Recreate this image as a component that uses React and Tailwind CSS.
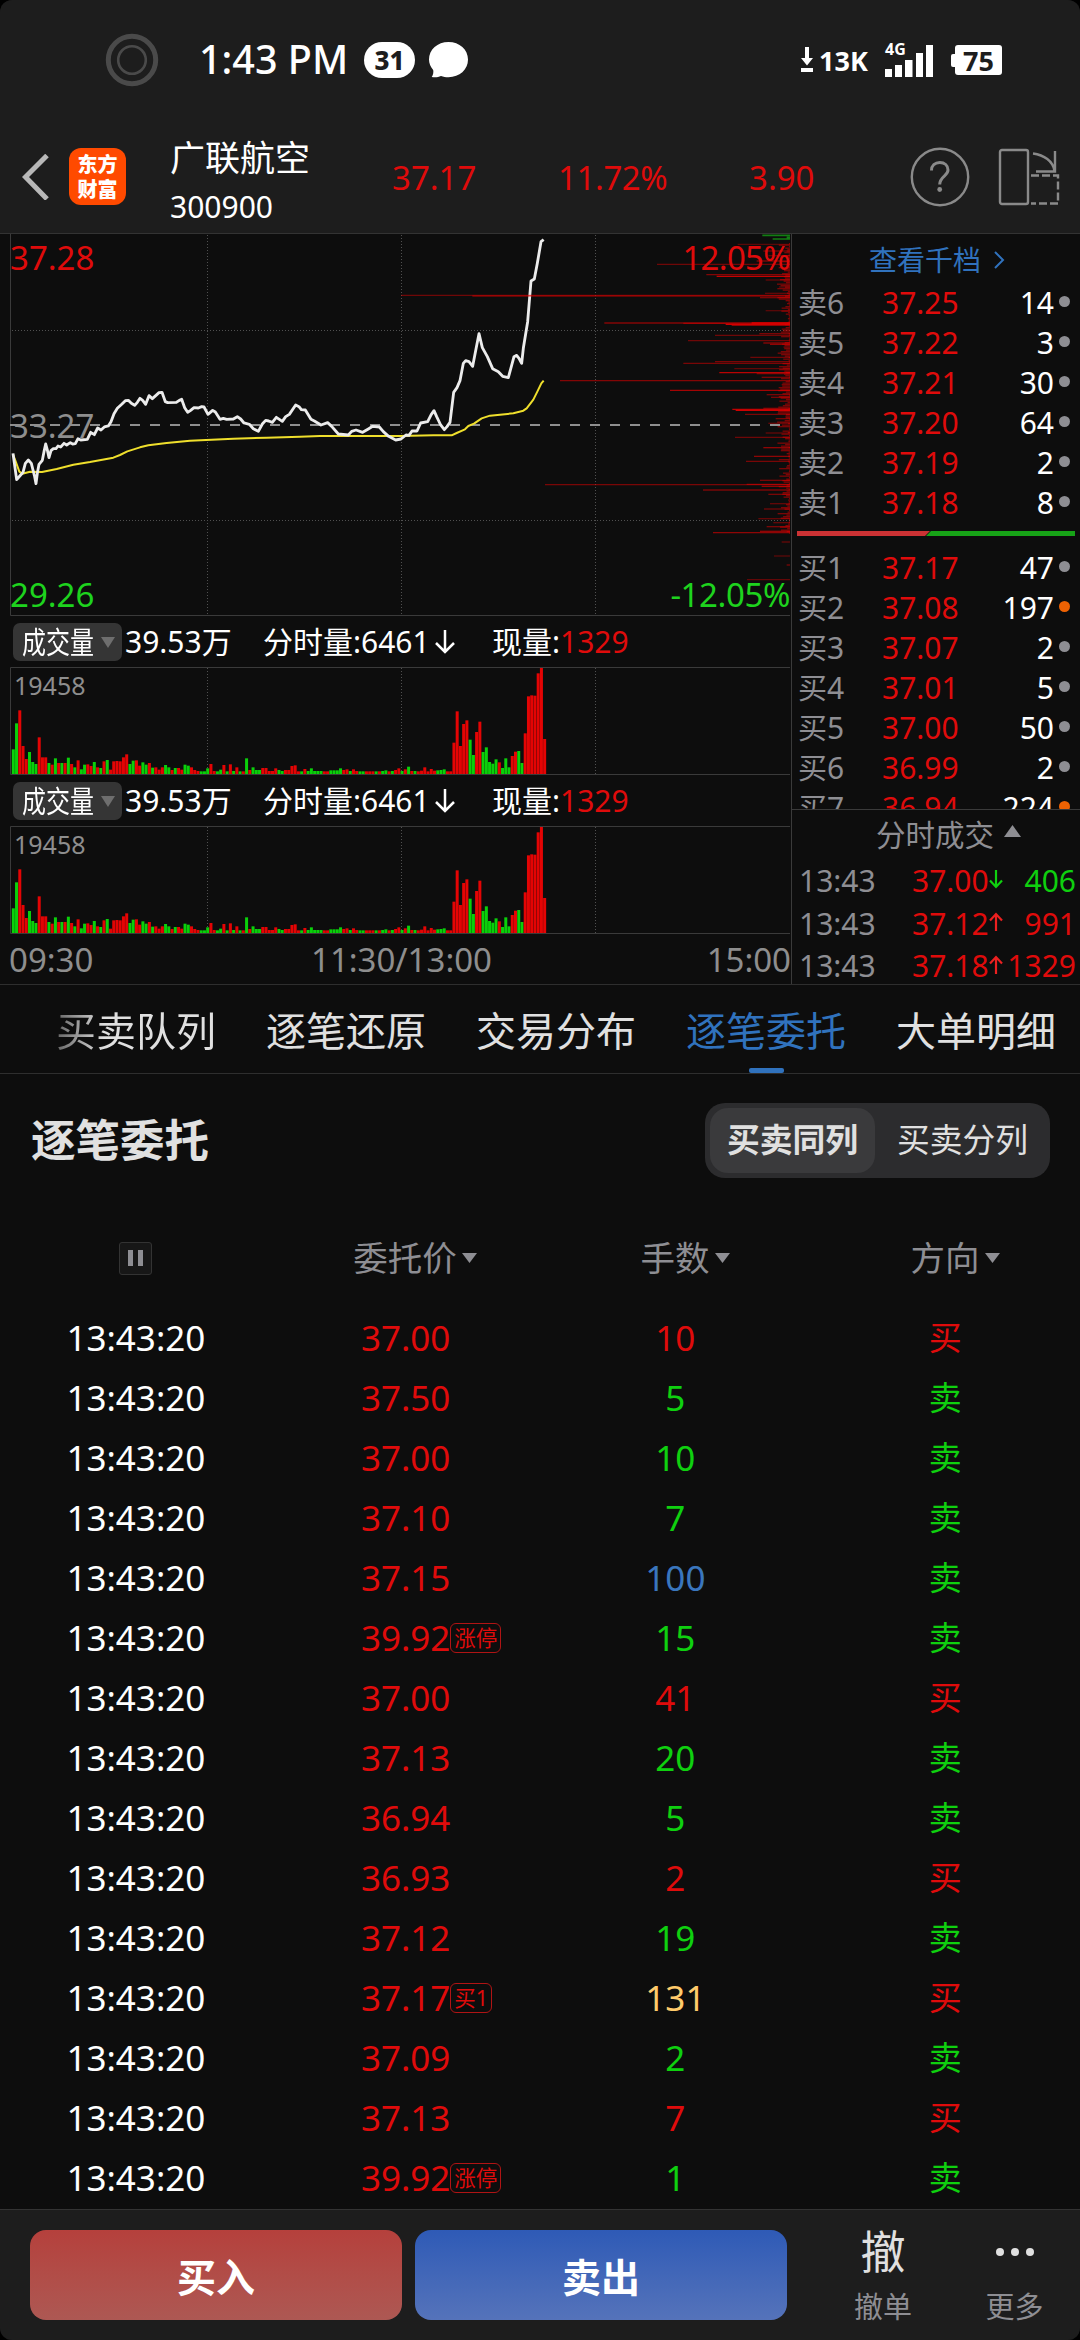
import clsx from "clsx";

const RED = "#df0b0b";
const GREEN = "#0fd00f";

// minute volume bars: colour + height
const volume =
  "G74 G152 R191 R84 R45 G66 G36 G30 R110 R50 R50 G33 R28 G47 R33 G33 R33 G49 R30 G20 R41 G14 G28 R29 R24 G36 R20 G18 R38 G42 " +
  "R13 R38 R39 R38 R50 R59 G30 G40 R41 R25 G35 G28 R33 G19 R20 R13 R20 G27 G20 R12 G18 R18 R13 G28 G25 R20 R12 R9 G8 G8 " +
  "G17 R30 R9 G8 G13 R27 G8 R29 G9 R20 G8 R8 G47 R12 G20 G12 G12 R18 R18 R9 R9 R17 G12 G9 R12 R12 R24 R26 R8 G8 " +
  "R15 G9 G17 G9 G9 G9 R8 R8 G11 G11 G11 G17 R12 R14 G9 R14 R9 G8 G8 R8 R8 R8 G8 R8 G9 G11 R8 G9 R12 R17 " +
  "G9 R14 G22 R9 G9 R8 R10 R20 R8 R15 R10 G11 G12 G14 R8 R8 R94 R188 R84 R150 R161 G103 G57 R126 R157 G66 G80 G36 G31 G44 " +
  "R35 G18 G47 G20 R54 R67 G69 G33 R122 R233 R236 R235 R302 R318 R105";

const bars = volume.split(" ").map((v) => ({ up: v[0] === "R", h: Number(v.slice(1)) / 3 }));

const priceLine =
  "39,685 50,764 62,750 69,742 76,715 85,705 94,715 99,735 104,755 108,776 112,745 117,718 127,706 132,680 137,657 142,675 147,698 153,677 160,671 168,671 174,663 182,666 192,655 200,660 211,653 218,657 226,656 234,641 242,645 262,643 272,622 283,629 293,609 303,615 313,606 325,603 333,590 342,566 352,550 366,537 376,527 385,526 394,535 404,541 412,532 420,520 428,526 437,538 447,512 457,521 468,511 477,503 486,502 496,530 503,533 529,532 538,526 545,523 554,548 563,562 572,556 582,548 595,549 605,545 612,546 624,568 638,556 646,561 660,583 670,580 680,583 700,582 712,575 722,582 732,594 748,598 760,611 775,619 787,597 797,586 806,588 817,592 829,577 847,589 857,575 868,568 887,540 897,545 904,554 916,555 933,583 943,588 963,600 983,593 995,604 1015,627 1045,630 1055,619 1068,615 1088,622 1105,612 1118,604 1138,606 1150,620 1166,634 1187,645 1203,642 1218,630 1227,631 1236,618 1251,618 1262,594 1283,590 1294,568 1302,557 1310,575 1322,600 1333,614 1341,605 1350,592 1361,502 1371,488 1380,467 1390,415 1397,407 1407,410 1418,424 1428,372 1437,326 1447,368 1462,395 1478,431 1495,440 1508,454 1525,458 1542,395 1550,391 1557,400 1565,415 1570,370 1583,290 1593,168 1603,162 1612,115 1623,50 1631,44";
const avgLine =
  "39,688 48,712 58,740 67,746 90,740 126,741 170,732 220,719 270,711 340,698 360,690 382,679 420,667 445,661 500,654 570,647 700,641 800,638 900,635 960,633 1200,633 1300,631 1355,631 1370,624 1395,613 1405,603 1422,596 1445,580 1470,572 1500,569 1540,565 1570,557 1580,550 1600,524 1612,500 1624,475 1631,467";

// order depth at each price level: [left edge, y, opacity]
const depth = [
  [1028, 58, 0.35], [786, 118, 0.45], [934, 149, 0.55], [965, 154, 0.85], [1105, 78, 0.5], [1085, 108, 0.5], [1120, 92, 0.4], [1112, 165, 0.4],
  [1152, 186, 0.35], [18, 211, 0.45], [232, 213, 0.5], [1110, 205, 0.4], [1095, 218, 0.5], [1112, 257, 0.35], [628, 294, 0.55], [865, 295, 0.5],
  [992, 298, 0.9], [1070, 294, 0.9], [1010, 301, 0.6], [960, 331, 0.45], [1093, 326, 0.5], [879, 347, 0.45], [1105, 354, 0.6], [1125, 358, 0.6],
  [1066, 397, 0.45], [865, 415, 0.5], [960, 410, 0.5], [1018, 431, 0.4], [973, 443, 0.8], [1085, 446, 0.5], [1100, 457, 0.5], [495, 467, 0.55],
  [825, 496, 0.7], [1115, 509, 0.5], [1128, 517, 0.5], [1012, 553, 0.8], [1022, 556, 0.9], [1105, 550, 0.5], [1050, 568, 0.5], [1142, 581, 0.5],
  [1120, 595, 0.4], [1020, 637, 0.45], [1112, 624, 0.4], [1105, 668, 0.6], [1077, 694, 0.6], [1053, 709, 0.5], [1095, 766, 0.5], [450, 779, 0.5],
  [1055, 778, 0.5], [1100, 784, 0.6], [924, 795, 0.5], [1120, 808, 0.5], [1125, 836, 0.4], [1107, 852, 0.45], [1090, 881, 0.4], [1135, 893, 0.4],
  [1115, 905, 0.5], [1095, 919, 0.6], [954, 923, 0.6], [1160, 951, 0.4], [1137, 993, 0.35], [1175, 1020, 0.5], [1056, 1064, 0.4],
];

// thin filler levels hugging the right edge
const depthSmall = Array.from({ length: 194 }, (_, i) => {
  const r = Math.abs(Math.sin(i * 12.9898) * 43758.5453) % 1;
  return [1185 - 3 - r * r * 36, 56 + i * 4.5];
});

const asks = [
  ["卖6", "37.25", 14], ["卖5", "37.22", 3], ["卖4", "37.21", 30],
  ["卖3", "37.20", 64], ["卖2", "37.19", 2], ["卖1", "37.18", 8],
];
const bids = [
  ["买1", "37.17", 47], ["买2", "37.08", 197], ["买3", "37.07", 2], ["买4", "37.01", 5],
  ["买5", "37.00", 50], ["买6", "36.99", 2], ["买7", "36.94", 224],
];
const ticks = [
  ["37.00", "down", 406],
  ["37.12", "up", 991],
  ["37.18", "up", 1329],
];
const tabs = ["买卖队列", "逐笔还原", "交易分布", "逐笔委托", "大单明细"];
const orders = [
  ["37.00", 10, "买"], ["37.50", 5, "卖"], ["37.00", 10, "卖"], ["37.10", 7, "卖"], ["37.15", 100, "卖"],
  ["39.92", 15, "卖", "涨停"], ["37.00", 41, "买"], ["37.13", 20, "卖"], ["36.94", 5, "卖"], ["36.93", 2, "买"],
  ["37.12", 19, "卖"], ["37.17", 131, "买", "买1"], ["37.09", 2, "卖"], ["37.13", 7, "买"], ["39.92", 1, "卖", "涨停"],
];

function StatusBar() {
  return (
    <div className="flex h-[120px] items-center pl-[105px] text-white">
      <svg width="54" height="54" viewBox="0 0 54 54" fill="none" stroke="#4a4a4a">
        <circle cx="27" cy="27" r="23.7" strokeWidth="5" />
        <circle cx="27" cy="27" r="13.8" strokeWidth="2.6" />
      </svg>
      <span className="ml-[40px] w-[150px] text-[39.500px] font-medium whitespace-nowrap">1:43 PM</span>
      <span className="ml-[15px] flex h-[36px] w-[51px] items-center justify-center rounded-full bg-white text-[26px] font-extrabold text-[#1d1d1d]">31</span>
      <svg className="ml-[14px]" width="39" height="36" viewBox="0 0 39 36" fill="#fff">
        <path d="M19.5 0C30.500 0 39 7.500 39 17.600S30.500 35.300 19.500 35.300c-3 0-5-.5-7.500-1.300-3 1.400-6 1.400-9.300 1 1.300-2 2-4.500 1.500-7C1.500 25 0 21.500 0 17.600 0 7.500 8.500 0 19.500 0z" />
      </svg>
      <svg className="ml-[332px]" width="14" height="26" viewBox="0 0 14 26" fill="#fff">
        <path d="M5 0h4v11h4L7 18.500 1 11h4zM1 21h12v4H1z" />
      </svg>
      <span className="ml-[5px] w-[53px] text-[27px] font-bold">13K</span>
      <svg className="ml-[13px] overflow-visible" width="50" height="36" viewBox="0 0 50 36" fill="#fff">
        <text x="0" y="13" fontSize="16" fontWeight="700">4G</text>
        <path d="M0 27h7v8H0zM10 23h7v12h-7zM20 18h7.500v17H20zM31 11h7v24h-7zM41 3h7v32h-7z" />
      </svg>
      <div className="ml-[16px] flex items-center">
        <span className="h-[13px] w-[4px] rounded-l-[2px] bg-white" />
        <span className="flex h-[30px] w-[47px] items-center justify-center rounded-[3px] bg-white text-[27px] font-bold text-[#1d1d1d]">75</span>
      </div>
    </div>
  );
}

function Header() {
  return (
    <div className="flex h-[113px] items-center pl-[22px]">
      <svg width="27" height="46" viewBox="0 0 27 46" fill="none" stroke="#b8b8b8" strokeWidth="5">
        <path d="M25 1.500 3.500 23 25 45" />
      </svg>
      <div className="ml-[20px] flex h-[57px] w-[57px] flex-col items-center justify-center rounded-[12px] bg-[#ff4a00] text-[20px] leading-[25px] font-black text-white">
        <span>东方</span>
        <span>财富</span>
      </div>
      <div className="ml-[44px] w-[222px] pt-[12px] text-white">
        <div className="text-[35px] leading-[48px]">广联航空</div>
        <div className="text-[30px] leading-[50px]">300900</div>
      </div>
      <div className="flex items-center pt-[2px] text-[33px] text-[#df0b0b]">
        <span className="w-[166px]">37.17</span>
        <span className="w-[191px] tracking-[-0.4px]">11.72%</span>
        <span className="w-[161px]">3.90</span>
      </div>
      <svg width="60" height="60" viewBox="0 0 60 60" fill="none" stroke="#8a8a8a" strokeWidth="2.400">
        <circle cx="30" cy="30" r="28.200" />
        <path d="M21.500 23.500c0-5 3.500-8 8.300-8s8.200 3 8.200 7.500c0 6-8.300 6.500-8.300 14.500" strokeWidth="3" />
        <circle cx="29.700" cy="42.500" r="2.400" fill="#8a8a8a" stroke="none" />
      </svg>
      <svg className="ml-[27px]" width="64" height="60" viewBox="0 0 64 60" fill="none" stroke="#8a8a8a" strokeWidth="2.400">
        <rect x="3" y="3" width="28" height="54" rx="2" />
        <path d="M36 6.500C47 8 56 14 57.500 24M58 4v20.500H39" />
        <path d="M34 28.500h27v28H34" strokeDasharray="8 3" />
      </svg>
    </div>
  );
}

function PriceChart() {
  return (
    <svg className="block" width="791" height="382" viewBox="0 0 791 382" fontSize="33">
      <g stroke="#3a3a3a" fill="none">
        <path d="M10.500 0V381.500H790" />
        <path d="M207.500 1V381M401.500 1V381M595.500 1V381M12 96.500H790M12 286.500H790" strokeDasharray="1 2" stroke="#505050" />
      </g>
      <text x="10" y="35.500" fill={RED}>37.28</text>
      <text x="10" y="204" fill="#8e8e8e">33.27</text>
      <text x="10" y="372.500" fill="#1ed31e">29.26</text>
      <path d="M10 191H790" stroke="#8f8f8f" strokeWidth="2" strokeDasharray="10 10" />
      <g transform="scale(.33333) translate(0 -27)" fill="none" strokeLinejoin="round">
        <polyline points={avgLine} stroke="#efdf2c" strokeWidth="6" />
        <polyline points={priceLine} stroke="#ececec" strokeWidth="8.500" />
        <g transform="translate(1185 0)" stroke="#e60000" strokeWidth="4">
          {depth.map(([x, y, o]) => (
            <path key={`${x}-${y}`} d={`M${x} ${y}H1185`} opacity={o} />
          ))}
          {depthSmall.map(([x, y]) => (
            <path key={y} d={`M${x} ${y}H1185`} opacity="0.5" />
          ))}
          <path d="M1102 31H1185M1175 37H1185M1133 42H1185" stroke="#159a15" strokeWidth="5" opacity="0.8" />
        </g>
      </g>
      <text x="790" y="35.500" textAnchor="end" letterSpacing="-0.7" fill={RED}>12.05%</text>
      <text x="790" y="372.500" textAnchor="end" letterSpacing="-0.4" fill="#1ed31e">-12.05%</text>
    </svg>
  );
}

function VolumePane() {
  return (
    <div>
      <div className="flex h-[51px] items-center pt-px pl-[13px] text-[30px] text-white">
        <div className="flex h-[38px] w-[109px] items-center rounded-[7px] bg-[#353535] pl-[9px]">
          <span className="w-[72px] origin-left scale-x-[0.8] text-[30px] whitespace-nowrap">成交量</span>
          <svg className="ml-[7px]" width="14" height="11" viewBox="0 0 14 11" fill="#6e6e6e">
            <path d="M0 0h14L7 11z" />
          </svg>
        </div>
        <span className="ml-[3px] w-[138px] whitespace-nowrap">39.53万</span>
        <span className="flex w-[229px] items-center whitespace-nowrap">
          分时量:6461
          <svg className="ml-[4px]" width="22" height="26" viewBox="0 0 22 26" fill="none" stroke="#fff" strokeWidth="2.500">
            <path d="M11 1v22M2 14l9 9 9-9" />
          </svg>
        </span>
        <span className="whitespace-nowrap">现量:<span className="text-[#df0b0b]">1329</span></span>
      </div>
      <svg className="block" width="791" height="108" viewBox="0 0 791 108">
        <path d="M790 .5H10.500V107.500H790" stroke="#3a3a3a" fill="none" />
        <path d="M207.500 1V107M401.500 1V107M595.500 1V107" strokeDasharray="1 2" stroke="#505050" />
        <text x="14" y="28" fontSize="25" fill="#8e8e8e">19458</text>
        {bars.map((b, i) => (
          <rect key={i} x={11.8 + i * 3.24} y={107 - b.h} width="3" height={b.h} fill={b.up ? "#e40404" : "#0ad00a"} />
        ))}
      </svg>
    </div>
  );
}

function QuoteRow({ row }) {
  const [label, price, qty] = row;
  return (
    <div className="flex h-[40px] shrink-0 items-center text-[30px]">
      <span className="w-[84px] text-[#8e8e93]"><span className="text-[29px]">{label[0]}</span>{label[1]}</span>
      <span className="w-[90px] text-[#df0b0b]">{price}</span>
      <span className="w-[82px] text-right text-white">{qty}</span>
      <span className={clsx("mb-[4px] ml-[5px] size-[11px] rounded-full", qty > 100 ? "bg-[#ee6203]" : "bg-[#8e8e93]")} />
    </div>
  );
}

function QuotePanel() {
  return (
    <div className="flex h-[750px] w-[289px] flex-col border-l border-[#3a3a3a]">
      <div className="flex h-[575px] flex-col overflow-hidden pl-[6px]">
        <div className="flex h-[49px] shrink-0 items-center pt-[2px] pl-[71px] text-[28px] text-[#3072bd]">
          查看千档
          <svg className="ml-[12px]" width="12" height="18" viewBox="0 0 12 18" fill="none" stroke="#3072bd" strokeWidth="2">
            <path d="M2 1l8 8-8 8" />
          </svg>
        </div>
        {asks.map((r) => <QuoteRow key={r[0]} row={r} />)}
        <svg className="mt-[8px] mb-[12px] ml-[-1px] shrink-0" width="278" height="5" viewBox="0 0 278 5">
          <path d="M0 0h133l-5 5H0z" fill="#cb3234" />
          <path d="M134 0h144v5H129z" fill="#17a317" />
        </svg>
        {bids.map((r) => <QuoteRow key={r[0]} row={r} />)}
      </div>
      <div className="flex h-[175px] flex-col border-t border-[#3a3a3a]">
        <div className="flex h-[50px] shrink-0 items-center pl-[84px] text-[29.500px] text-[#8e8e93]">
          分时成交
          <svg className="mb-[9px] ml-[10px]" width="17" height="12" viewBox="0 0 17 12" fill="#8e8e93">
            <path d="M8.500 0 17 12H0z" />
          </svg>
        </div>
        {ticks.map(([price, dir, qty]) => (
          <div key={price} className="flex h-[42.500px] shrink-0 items-center pr-[4px] pl-[7px] text-[30px]">
            <span className="w-[113px] text-[#8e8e93]">13:43</span>
            <span className="w-[77px] text-[#df0b0b]">{price}</span>
            <svg className={clsx("mb-[4px] w-[14px] shrink-0", dir === "up" && "rotate-180")} height="19" viewBox="0 0 14 19" fill="none" stroke={dir === "up" ? "#ec2020" : GREEN} strokeWidth="2.200">
              <path d="M7 0v17M1 10.500l6 6.500 6-6.500" />
            </svg>
            <span className={clsx("flex flex-1 justify-end", dir === "up" ? "text-[#df0b0b]" : "text-[#0fd00f]")}>{qty}</span>
          </div>
        ))}
      </div>
    </div>
  );
}

function Tabs() {
  return (
    <div className="flex h-[90px] gap-[50px] border-t border-b border-[#2e2e2e] pl-[56px] text-[40px] text-[#e0e0e0]">
      {tabs.map((t, i) => (
        <div key={t} className={clsx("flex w-[160px] shrink-0 flex-col items-center pt-[25px] whitespace-nowrap", i === 3 && "text-[#3072bd]")}>
          {i === 0 ? (
            <span className="bg-linear-to-r from-[#666] to-[#e0e0e0] to-30% bg-clip-text leading-[42px] text-transparent">{t}</span>
          ) : (
            <span className="leading-[42px]">{t}</span>
          )}
          {i === 3 && <span className="mt-[16px] h-[5px] w-[35px] rounded-[2px] bg-[#3072bd]" />}
        </div>
      ))}
    </div>
  );
}

function HeadCell({ children }) {
  return (
    <div className="flex justify-center">
      <span className="relative">
        {children}
        <svg className="absolute top-[12px] left-full ml-[5px]" width="15" height="10" viewBox="0 0 15 10" fill="#8e8e93">
          <path d="M0 0h15L7.500 10z" />
        </svg>
      </span>
    </div>
  );
}

function qtyColor(qty, side) {
  if (qty === 100) return "text-[#3a76bd]";
  if (qty > 100) return "text-[#ffcb6b]";
  return side === "买" ? "text-[#df0b0b]" : "text-[#0fd00f]";
}

function Orders() {
  return (
    <div className="h-[1135px] overflow-hidden">
      <div className="flex h-[132px] items-center justify-between pr-[30px] pl-[31px]">
        <h2 className="text-[44.500px] font-bold text-[#e0e0e0]">逐笔委托</h2>
        <div className="flex h-[75px] w-[345px] items-center rounded-[20px] bg-[#2c2c2e] pl-[5px] text-[32.800px] text-[#e0e0e0]">
          <span className="flex h-[65px] w-[165px] items-center justify-center rounded-[18px] bg-[#3a3a3c] font-semibold">买卖同列</span>
          <span className="flex flex-1 items-center justify-center">买卖分列</span>
        </div>
      </div>
      <div className="mt-[18px] grid h-[68px] grid-cols-4 items-center text-[34.500px] text-[#8e8e93]">
        <div className="flex justify-center">
          <span className="flex h-[33px] w-[33px] items-center justify-center gap-[5px] rounded-[3px] border border-[#333] bg-[#171717]">
            <i className="h-[16px] w-[5px] bg-[#8e8e93]" />
            <i className="h-[16px] w-[5px] bg-[#8e8e93]" />
          </span>
        </div>
        <HeadCell>委托价</HeadCell>
        <HeadCell>手数</HeadCell>
        <HeadCell>方向</HeadCell>
      </div>
      <div className="mt-[15px]">
        {orders.map(([price, qty, side, tag], i) => (
          <div key={i} className="grid h-[60px] grid-cols-4 items-center pl-px text-center text-[35px]">
            <span className="text-white">13:43:20</span>
            <span className="flex justify-center text-[#df0b0b]">
              <span className="relative">
                {price}
                {tag && (
                  <span className="absolute top-[3px] left-full flex h-[30px] items-center rounded-[6px] border border-[#b01414] px-[3px] text-[21.500px] whitespace-nowrap">{tag}</span>
                )}
              </span>
            </span>
            <span className={qtyColor(qty, side)}>{qty}</span>
            <span className={clsx("text-[33px]", side === "买" ? "text-[#df0b0b]" : "text-[#0fd00f]")}>{side}</span>
          </div>
        ))}
      </div>
    </div>
  );
}

function BottomBar() {
  return (
    <div className="flex h-[131px] border-t border-[#333] bg-[#1d1d1d] pt-[20px] pl-[30px]">
      <button className="h-[90px] w-[372px] rounded-[16px] bg-linear-to-b from-[#b5403c] to-[#ad5853] pt-[3px] text-[39px] font-bold text-white">买入</button>
      <button className="ml-[13px] h-[90px] w-[372px] rounded-[16px] bg-linear-to-b from-[#2e5ab6] to-[#5573ba] pt-[3px] text-[39px] font-bold text-white">卖出</button>
      <div className="ml-[30px] flex w-[132px] flex-col items-center text-[#e0e0e0]">
        <span className="text-[45px] leading-[44px]">撤</span>
        <span className="mt-[16px] text-[29px] leading-[34px] text-[#8e8e93]">撤单</span>
      </div>
      <div className="flex w-[131px] flex-col items-center">
        <span className="flex h-[44px] items-center gap-[7px]">
          <i className="size-[8px] rounded-full bg-[#e0e0e0]" />
          <i className="size-[8px] rounded-full bg-[#e0e0e0]" />
          <i className="size-[8px] rounded-full bg-[#e0e0e0]" />
        </span>
        <span className="mt-[16px] text-[29px] leading-[34px] text-[#8e8e93]">更多</span>
      </div>
    </div>
  );
}

export default function App() {
  return (
    <div className="bg-black">
      <div className="flex h-[2340px] w-[1080px] flex-col overflow-hidden rounded-[12px] bg-[#0d0d0d] font-['Noto_Sans','Noto_Sans_CJK_SC',sans-serif] leading-none">
        <div className="h-[234px] border-b border-[#333] bg-[#1d1d1d]">
          <StatusBar />
          <Header />
        </div>
        <div className="flex h-[750px]">
          <div className="w-[791px]">
            <PriceChart />
            <VolumePane />
            <VolumePane />
            <div className="flex h-[50px] items-center justify-between pl-[9px] text-[33px] text-[#8e8e8e]">
              <span>09:30</span>
              <span className="pl-[3px]">11:30/13:00</span>
              <span>15:00</span>
            </div>
          </div>
          <QuotePanel />
        </div>
        <Tabs />
        <Orders />
        <BottomBar />
      </div>
    </div>
  );
}
